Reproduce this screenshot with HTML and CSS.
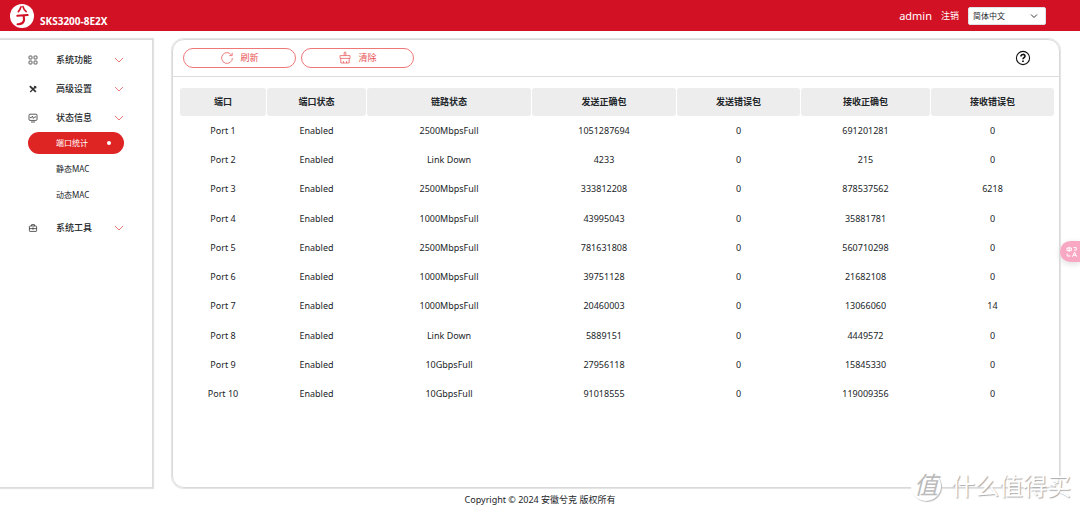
FILE: index.html
```html
<!DOCTYPE html>
<html lang="zh-CN">
<head>
<meta charset="utf-8">
<meta name="viewport" content="width=device-width, initial-scale=1">
<title>SKS3200-8E2X</title>
<link rel="stylesheet" href="styles.css">
</head>
<body>
<header class="topbar">
  <div class="brand">
    <svg class="logo" viewBox="0 0 24 24" aria-hidden="true">
      <circle cx="12" cy="12" r="12" fill="#fff"/>
      <path d="M11 2.8C10.4 4.8 9.6 6.4 8.4 7.6M13 2.6C13.6 4.8 14.6 6.6 16.2 7.6" fill="none" stroke="#d21124" stroke-width="1.7" stroke-linecap="round"/>
      <path d="M7.4 11.8 17.6 11M14 11.6C13.2 13 14.4 14.4 14 16.4 13.4 18.6 11.8 20.4 7.6 20.2" fill="none" stroke="#d21124" stroke-width="2.1" stroke-linecap="round" stroke-linejoin="round"/>
    </svg>
    <h1 class="model">SKS3200-8E2X</h1>
  </div>
  <div class="account">
    <span class="user">admin</span>
    <a class="logout" href="#">注销</a>
    <span class="lang-wrap">
      <select class="lang" aria-label="语言"><option>简体中文</option><option>English</option></select>
      <svg class="lang-arrow" viewBox="0 0 8 8" aria-hidden="true"><path d="M1 2.5 4 5.5 7 2.5"/></svg>
    </span>
  </div>
</header>
<div class="layout">
  <nav class="sidebar">
    <a class="menu" href="#">
      <svg class="menu-icon" viewBox="0 0 10 10" aria-hidden="true"><rect x="1" y="1" width="3" height="3" rx=".6"/><rect x="6" y="1" width="3" height="3" rx=".6"/><rect x="1" y="6" width="3" height="3" rx=".6"/><rect x="6" y="6" width="3" height="3" rx=".6"/></svg>
      <span class="menu-label">系统功能</span>
      <svg class="chevron" viewBox="0 0 10 6" aria-hidden="true"><path d="M1 1 5 5 9 1"/></svg>
    </a>
    <a class="menu" href="#">
      <svg class="menu-icon" viewBox="0 0 10 10" aria-hidden="true"><path d="M3 3.2 7.8 7.8" stroke-width="1.8"/><path d="M2.2 8 7.6 2.6" stroke-width="1.3"/><path d="M1.8 2.2 3.6 3.8M7 1.8 6.6 3.6 8.4 3.4" stroke-width="1.6"/></svg>
      <span class="menu-label">高级设置</span>
      <svg class="chevron" viewBox="0 0 10 6" aria-hidden="true"><path d="M1 1 5 5 9 1"/></svg>
    </a>
    <a class="menu" href="#">
      <svg class="menu-icon" viewBox="0 0 10 10" aria-hidden="true"><rect x="1" y="1.2" width="8" height="6.2" rx="1"/><path d="M2 4.6H3.4L4.4 3.2 5.4 5.4 6.4 4H8M3 9H7"/></svg>
      <span class="menu-label">状态信息</span>
      <svg class="chevron" viewBox="0 0 10 6" aria-hidden="true"><path d="M1 1 5 5 9 1"/></svg>
    </a>
    <div class="submenu">
      <a class="sub active" href="#" aria-current="page"><span>端口统计</span><i class="dot"></i></a>
      <a class="sub" href="#">静态MAC</a>
      <a class="sub" href="#">动态MAC</a>
    </div>
    <a class="menu" href="#">
      <svg class="menu-icon" viewBox="0 0 10 10" aria-hidden="true"><rect x="1.4" y="3" width="7.2" height="5.4" rx=".6"/><path d="M3.6 3V1.6H6.4V3M1.4 5.6H8.6M5 4.4V6.8"/></svg>
      <span class="menu-label">系统工具</span>
      <svg class="chevron" viewBox="0 0 10 6" aria-hidden="true"><path d="M1 1 5 5 9 1"/></svg>
    </a>
  </nav>
  <main class="panel">
    <div class="toolbar">
      <button class="action" type="button">
        <svg class="action-icon" viewBox="0 0 14 14" aria-hidden="true"><path d="M11.6 4.2A5.4 5.4 0 1 0 12.4 7M12.2 1.8V4.6H9.2"/></svg>刷新
      </button>
      <button class="action" type="button">
        <svg class="action-icon" viewBox="0 0 14 14" aria-hidden="true"><path d="M6.2 4.6V1.2H7.8V4.6M2 7.4V4.6H12V7.4ZM2.8 7.4V12H11.2V7.4M5.4 12V10M8.6 12V10"/></svg>清除
      </button>
      <button class="help" type="button" aria-label="帮助">
        <svg class="help-icon" viewBox="0 0 16 16" aria-hidden="true"><circle cx="8" cy="8" r="6.6" stroke-width="1.1"/><path d="M6 6.4C6 3.8 10 3.8 10 6.2 10 7.6 8 7.6 8 9.3" stroke-width="1.6"/><path d="M8 10.6V12" stroke-width="1.7"/></svg>
      </button>
    </div>
    <div class="table-area">
      <table class="stats">
        <colgroup><col class="c-port"><col class="c-state"><col class="c-link"><col class="c-txok"><col class="c-txerr"><col class="c-rxok"><col class="c-rxerr"></colgroup>
        <thead><tr><th>端口</th><th>端口状态</th><th>链路状态</th><th>发送正确包</th><th>发送错误包</th><th>接收正确包</th><th>接收错误包</th></tr></thead>
        <tbody>
          <tr><td>Port 1</td><td>Enabled</td><td>2500MbpsFull</td><td>1051287694</td><td>0</td><td>691201281</td><td>0</td></tr>
          <tr><td>Port 2</td><td>Enabled</td><td>Link Down</td><td>4233</td><td>0</td><td>215</td><td>0</td></tr>
          <tr><td>Port 3</td><td>Enabled</td><td>2500MbpsFull</td><td>333812208</td><td>0</td><td>878537562</td><td>6218</td></tr>
          <tr><td>Port 4</td><td>Enabled</td><td>1000MbpsFull</td><td>43995043</td><td>0</td><td>35881781</td><td>0</td></tr>
          <tr><td>Port 5</td><td>Enabled</td><td>2500MbpsFull</td><td>781631808</td><td>0</td><td>560710298</td><td>0</td></tr>
          <tr><td>Port 6</td><td>Enabled</td><td>1000MbpsFull</td><td>39751128</td><td>0</td><td>21682108</td><td>0</td></tr>
          <tr><td>Port 7</td><td>Enabled</td><td>1000MbpsFull</td><td>20460003</td><td>0</td><td>13066060</td><td>14</td></tr>
          <tr><td>Port 8</td><td>Enabled</td><td>Link Down</td><td>5889151</td><td>0</td><td>4449572</td><td>0</td></tr>
          <tr><td>Port 9</td><td>Enabled</td><td>10GbpsFull</td><td>27956118</td><td>0</td><td>15845330</td><td>0</td></tr>
          <tr><td>Port 10</td><td>Enabled</td><td>10GbpsFull</td><td>91018555</td><td>0</td><td>119009356</td><td>0</td></tr>
        </tbody>
      </table>
    </div>
  </main>
</div>
<footer class="footer">Copyright © 2024 安徽兮克 版权所有</footer>
<button class="translate" type="button" aria-label="翻译">
  <svg class="translate-icon" viewBox="0 0 12 12" aria-hidden="true"><path d="M1 2H5.4V4.6H1ZM3.2 .8V6M7.4 1.6H10.2V4.2H8.2M1.2 7.6V10H4.4M6.4 10.8 8.6 6.2 10.8 10.8M7.2 9.2H10"/></svg>
</button>
<div class="watermark"><span class="seal">值</span><span>什么值得买</span></div>
</body>
</html>
```
FILE: styles.css
```css
* {
  box-sizing: border-box;
}

body {
  margin: 0;
  min-height: 100vh;
  display: flex;
  flex-direction: column;
  position: relative;
  overflow-x: hidden;
  background: #fff;
  color: #212529;
  font: 9px/14px "Noto Sans", "Noto Sans CJK SC", sans-serif;
}

a {
  color: inherit;
  text-decoration: none;
}

button {
  font: inherit;
  cursor: pointer;
}

svg {
  flex: none;
}

.topbar {
  height: 31px;
  padding: 0 34px 0 10px;
  display: flex;
  align-items: center;
  justify-content: space-between;
  background: #d21124;
  color: #fff;
}

.brand {
  display: flex;
  align-items: center;
  gap: 6px;
}

.logo {
  width: 24px;
  height: 24px;
}

.model {
  margin: 0;
  padding-top: 10px;
  font-size: 10px;
  line-height: 14px;
  font-weight: 700;
}

.account {
  display: flex;
  align-items: center;
  gap: 9px;
}

.user {
  font-size: 11px;
}

.lang-wrap {
  position: relative;
  display: flex;
}

.lang {
  width: 78px;
  height: 18px;
  padding: 0 4px;
  appearance: none;
  border: 1px solid #dee2e6;
  border-radius: 2px;
  background: #fff;
  color: #212529;
  font: inherit;
  font-size: 8px;
}

.lang-arrow {
  position: absolute;
  right: 8px;
  top: 5px;
  width: 8px;
  height: 8px;
  fill: none;
  stroke: #343a40;
  pointer-events: none;
}

.layout {
  flex: 1;
  display: flex;
  gap: 19px;
  padding: 8px 20px 0 0;
}

.sidebar {
  width: 153px;
  padding-top: 5px;
  border: 1px solid #dcdcdc;
  border-left: 0;
  box-shadow: 0 0 1px 1px #e3e3e3;
}

.menu {
  height: 29px;
  padding: 0 28px;
  display: flex;
  align-items: center;
}

.menu-icon {
  width: 10px;
  height: 10px;
  fill: none;
  stroke: #333;
  stroke-width: .8;
}

.menu-label {
  flex: 1;
  padding-left: 18px;
  font-weight: 500;
}

.chevron {
  width: 10px;
  height: 6px;
  fill: none;
  stroke: #ee7778;
}

.submenu {
  padding: 0 28px 5px;
  display: flex;
  flex-direction: column;
  font-size: 8px;
}

.sub {
  height: 26px;
  padding: 0 13px 0 28px;
  display: flex;
  align-items: center;
  justify-content: space-between;
}

.active {
  height: 22px;
  margin-bottom: 2px;
  border-radius: 11px;
  background: #df2524;
  color: #fff;
}

.dot {
  width: 4px;
  height: 4px;
  border-radius: 50%;
  background: #fff;
}

.panel {
  flex: 1;
  min-width: 0;
  border: 1px solid #d9d9d9;
  border-radius: 12px;
  box-shadow: 0 0 1px 1px #e3e3e3;
}

.toolbar {
  height: 37px;
  padding: 0 28px 0 10px;
  display: flex;
  align-items: center;
  gap: 5px;
  border-bottom: 1px solid #dcdcdc;
}

.action {
  width: 113px;
  height: 20px;
  padding: 0;
  display: flex;
  align-items: center;
  justify-content: center;
  gap: 6px;
  border: 1px solid #ee7778;
  border-radius: 10px;
  background: #fff;
  color: #e8504f;
}

.action-icon {
  width: 14px;
  height: 14px;
  fill: none;
  stroke: #ea605f;
  stroke-width: .8;
}

.help {
  margin-left: auto;
  padding: 0;
  display: flex;
  border: 0;
  background: none;
}

.help-icon {
  width: 16px;
  height: 16px;
  fill: none;
  stroke: #111;
}

.table-area {
  padding: 11px 6px;
}

.stats {
  width: 100%;
  height: 321px;
  table-layout: fixed;
  border-collapse: separate;
  border-spacing: 1px 0;
  text-align: center;
}

.stats th,
.stats td {
  padding: 0;
}

.stats th {
  height: 28px;
  border-radius: 3px;
  background: #ededed;
  font-weight: 700;
}

.c-port {
  width: 86px;
}

.c-state {
  width: 99px;
}

.c-link {
  width: 164px;
}

.c-txok {
  width: 144px;
}

.c-txerr {
  width: 123px;
}

.c-rxok {
  width: 129px;
}

.c-rxerr {
  width: 123px;
}

.footer {
  height: 24px;
  display: flex;
  align-items: center;
  justify-content: center;
}

.translate {
  position: absolute;
  right: 0;
  top: 241px;
  width: 20px;
  height: 21px;
  padding: 0 0 0 6px;
  display: flex;
  align-items: center;
  border: 0;
  border-radius: 11px 0 0 11px;
  background: #f9a8c4;
  box-shadow: 0 2px 6px #ddd;
}

.translate-icon {
  width: 12px;
  height: 12px;
  fill: none;
  stroke: #fff;
}

.watermark {
  position: absolute;
  right: 9px;
  bottom: 10px;
  display: flex;
  align-items: center;
  gap: 10px;
  color: #fff;
  font-size: 24px;
  line-height: 32px;
  text-shadow: 1px 1px 1px #aaa;
  pointer-events: none;
}

.seal {
  width: 30px;
  height: 30px;
  border-radius: 50%;
  background: #fff;
  box-shadow: 1px 1px 1px #bbb;
  color: #bbb;
  font-size: 24px;
  font-style: italic;
  line-height: 28px;
  text-align: center;
  text-shadow: none;
}
```
